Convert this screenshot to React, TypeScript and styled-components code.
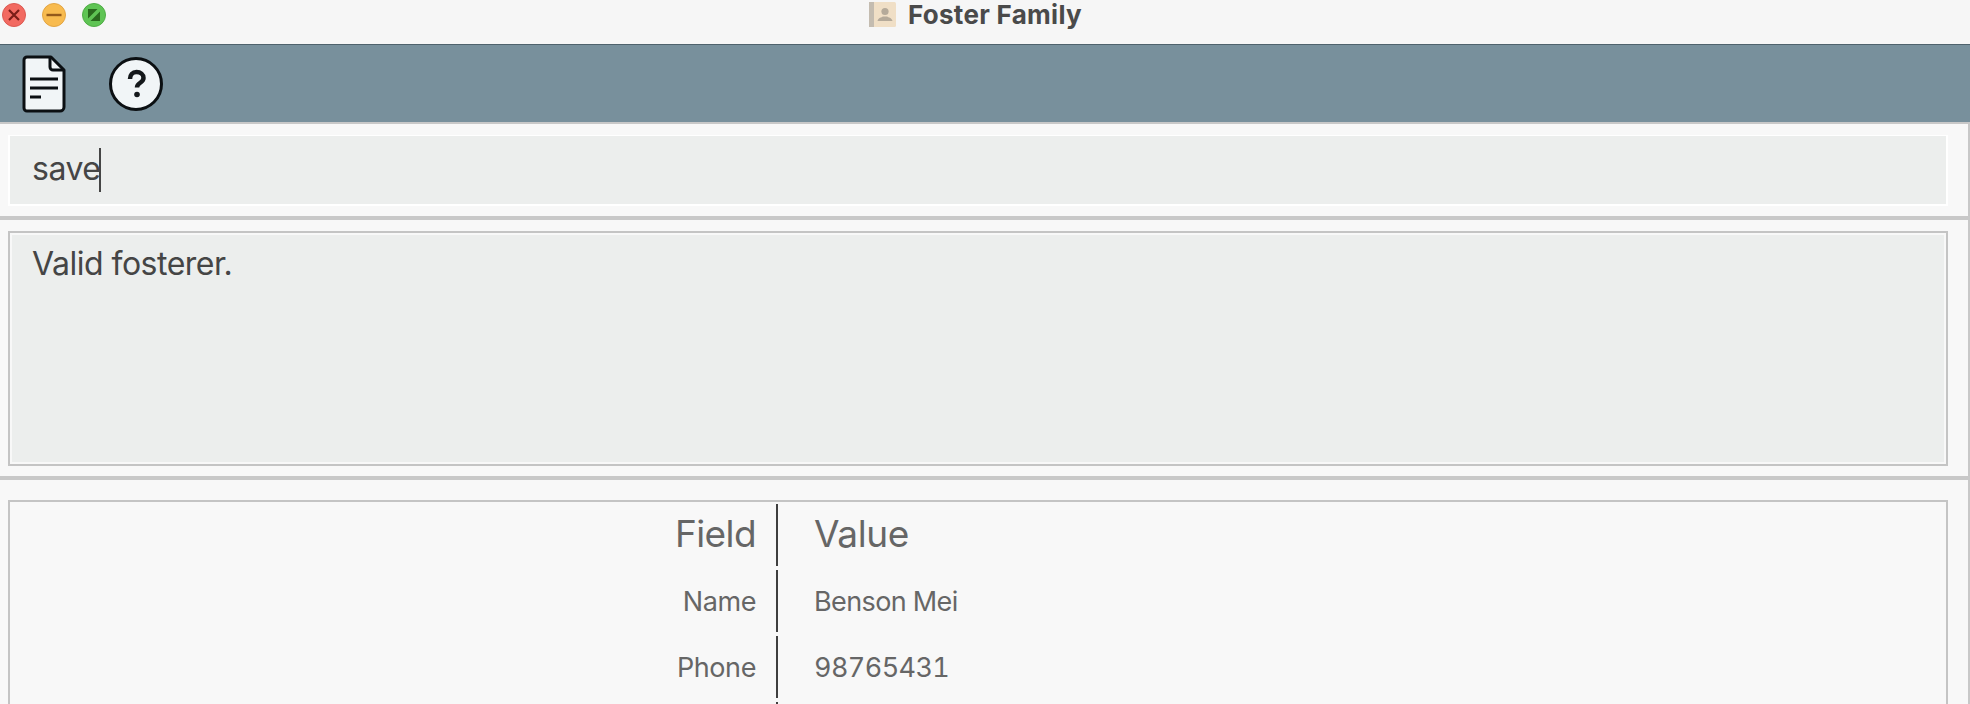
import React from "react";
import styled, {createGlobalStyle} from "styled-components";

const GlobalStyle = createGlobalStyle`
  *, *::before, *::after {
    box-sizing: border-box;
  }
  html, body {
    margin: 0;
    padding: 0;
    background: #f8f8f8;
    overflow: hidden;
  }
`;

const Window = styled.div`
  width: 1970px;
  height: 704px;
  overflow: hidden;
  display: flex;
  flex-direction: column;
  font-family: Inter, "Liberation Sans", sans-serif;
`;

const TitleBar = styled.header`
  height: 45px;
  flex: none;
  background: #f6f6f6;
  border-bottom: 1px solid #4f626c;
  display: grid;
  grid-template-columns: 1fr auto 1fr;
  align-items: start;
`;

const Lights = styled.div`
  display: flex;
  gap: 16px;
  padding: 3px 0 0 2px;
`;

const Light = styled.svg`
  width: 24px;
  height: 24px;
  display: block;
`;

const Title = styled.div`
  display: flex;
  align-items: center;
  gap: 12px;
  height: 28px;
  margin-right: 20px;
  font-size: 26px;
  font-weight: 700;
  letter-spacing: 0.3px;
  color: #4a4a4a;
`;

const Toolbar = styled.nav`
  height: 77px;
  flex: none;
  background: #78909c;
  display: flex;
  align-items: center;
  gap: 42px;
  padding-left: 22px;
`;

const ToolIcon = styled.svg`
  display: block;
  flex: none;
`;

const Body = styled.main`
  flex: 1;
  min-height: 0;
  display: flex;
  flex-direction: column;
  border-right: 2px solid #c8c8c8;
`;

const Pane = styled.section<{$height: number; $rule: number}>`
  height: ${(p) => p.$height}px;
  flex: none;
  padding: 0 20px 0 8px;
  display: flex;
  align-items: flex-start;
  border-top: ${(p) => p.$rule}px solid #c8c8c8;
`;

const CommandBox = styled.div`
  flex: 1;
  height: 71px;
  margin-top: 11px;
  background: #eceeed;
  border: solid #fff;
  border-width: 1px 2px 2px 2px;
  padding: 0 0 3px 22px;
  display: flex;
  align-items: center;
  font-size: 32px;
  letter-spacing: -0.5px;
  color: #454545;
`;

const Caret = styled.span`
  width: 2px;
  height: 44px;
  margin: 3px 0 0 -1px;
  background: #454545;
`;

const ResultBox = styled.div`
  flex: 1;
  height: 235px;
  margin-top: 11px;
  background: #eceeed;
  border: 2px solid #c4c4c4;
  box-shadow: inset 0 0 0 2px #f8f8f8;
  padding: 10px 0 0 22px;
  font-size: 32px;
  line-height: 42px;
  letter-spacing: -0.5px;
  color: #454545;
`;

const TableBox = styled.div`
  flex: 1;
  height: 300px;
  margin-top: 20px;
  border: solid #c4c4c4;
  border-width: 2px 2px 0 2px;
  padding-top: 2px;
  display: grid;
  grid-template-columns: 766px 1fr;
  grid-auto-rows: 62px;
  row-gap: 4px;
  color: #666;
`;

const FieldCell = styled.div<{$head?: boolean}>`
  display: flex;
  align-items: center;
  justify-content: flex-end;
  padding: 0 20px ${(p) => (p.$head ? 3 : 0)}px 0;
  font-size: ${(p) => (p.$head ? 37 : 27)}px;
  letter-spacing: ${(p) => (p.$head ? -0.6 : -0.4)}px;
`;

const ValueCell = styled.div<{$head?: boolean}>`
  display: flex;
  align-items: center;
  padding: 0 0 ${(p) => (p.$head ? 3 : 0)}px 36px;
  border-left: 2px solid #3f3f3f;
  font-size: ${(p) => (p.$head ? 37 : 27)}px;
  letter-spacing: ${(p) => (p.$head ? -0.4 : -0.6)}px;
  font-variant-numeric: tabular-nums;
`;

const rows = [
  {field: "Field", value: "Value", head: true},
  {field: "Name", value: "Benson Mei"},
  {field: "Phone", value: "98765431"},
  {field: "", value: ""},
];

const App: React.FC = () => {
  return (
    <Window>
      <GlobalStyle />
      <TitleBar>
        <Lights>
          <Light viewBox="0 0 24 24">
            <circle cx="12" cy="12" r="11.5" fill="#f26a61" stroke="#dc5a52" />
            <path d="M7 7l10 10M17 7L7 17" stroke="#7a1d18" strokeWidth="2.2" />
          </Light>
          <Light viewBox="0 0 24 24">
            <circle cx="12" cy="12" r="11.5" fill="#f8bb4f" stroke="#e2a544" />
            <path d="M4.5 12h15" stroke="#93591b" strokeWidth="2.4" />
          </Light>
          <Light viewBox="0 0 24 24">
            <circle cx="12" cy="12" r="11.5" fill="#5fc454" stroke="#50ad46" />
            <path d="M6 6h9.500L6 15.500zM18 18H8.500L18 8.500z" fill="#2a6a1e" />
          </Light>
        </Lights>
        <Title>
          <svg width="28" height="27" viewBox="0 0 28 27">
            <rect x="1" y="1" width="27" height="25" rx="1.5" fill="#f0dfc6" />
            <rect x="1" y="1" width="5" height="25" fill="#c4bcb0" />
            <circle cx="17" cy="10.5" r="3.6" fill="#b5aa9a" />
            <path d="M9.500 20c1-3.500 4-3.500 5.500-4.500h4c1.500 1 4.500 1 5.500 4.500z" fill="#b5aa9a" />
          </svg>
          Foster Family
        </Title>
        <div />
      </TitleBar>
      <Toolbar>
        <ToolIcon width="44" height="58" viewBox="0 0 44 58">
          <path
            d="M5 2h24l13 13v37a4 4 0 0 1-4 4H5a3 3 0 0 1-3-3V5a3 3 0 0 1 3-3z"
            fill="#f1f5f7"
            stroke="#0b0f12"
            strokeWidth="3"
            strokeLinejoin="round"
          />
          <path d="M28 2v10a3 3 0 0 0 3 3h11" fill="none" stroke="#0b0f12" strokeWidth="3" />
          <path d="M8 24h28M8 33h28M8 42h11" stroke="#0b0f12" strokeWidth="3" />
        </ToolIcon>
        <ToolIcon width="56" height="56" viewBox="0 0 56 56">
          <circle cx="28" cy="28" r="25.500" fill="#f1f5f7" stroke="#0b0f12" strokeWidth="3" />
          <path
            d="M22 23c0-4 2.500-7 6.500-7s7 2.500 7 6c0 5-6.500 4.500-6.500 9.500"
            fill="none"
            stroke="#14181b"
            strokeWidth="4.500"
          />
          <circle cx="29" cy="38.500" r="2.800" fill="#14181b" />
        </ToolIcon>
      </Toolbar>
      <Body>
        <Pane $height={94} $rule={2}>
          <CommandBox>
            save
            <Caret />
          </CommandBox>
        </Pane>
        <Pane $height={260} $rule={4}>
          <ResultBox>Valid fosterer.</ResultBox>
        </Pane>
        <Pane $height={300} $rule={4}>
          <TableBox>
            {rows.map((row, i) => (
              <React.Fragment key={i}>
                <FieldCell $head={row.head}>{row.field}</FieldCell>
                <ValueCell $head={row.head}>{row.value}</ValueCell>
              </React.Fragment>
            ))}
          </TableBox>
        </Pane>
      </Body>
    </Window>
  );
};

export default App;
